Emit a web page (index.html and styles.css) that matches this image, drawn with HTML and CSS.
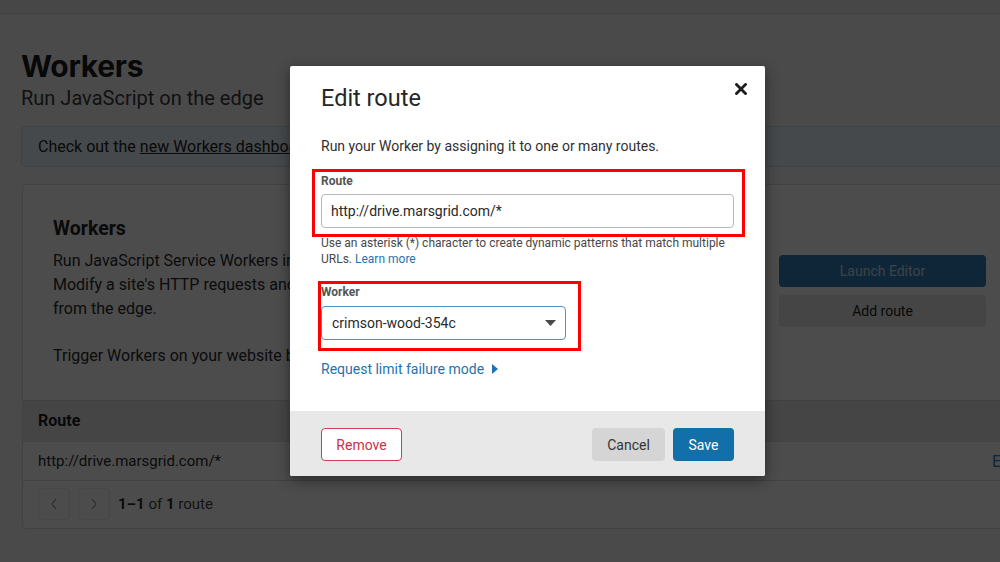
FILE: index.html
```html
<!DOCTYPE html>
<html lang="en">
<head>
<meta charset="utf-8">
<title>Workers – Edit route</title>
<link rel="stylesheet" href="styles.css">
</head>
<body>
<div class="topbar"></div>
<main class="page">
  <h1 class="page-title">Workers</h1>
  <p class="page-sub">Run JavaScript on the edge</p>
  <div class="banner">Check out the <a class="banner-link" href="#">new Workers dashboard</a> to manage your scripts.</div>

  <section class="card">
    <div class="card-head">
      <div class="card-text">
        <h2 class="card-title">Workers</h2>
        <p class="card-p">Run JavaScript Service Workers in Cloudflare's global network.<br>Modify a site's HTTP requests and responses, make parallel requests, or generate responses<br>from the edge.</p>
        <p class="card-p card-p2">Trigger Workers on your website by adding a route.</p>
      </div>
      <div class="card-actions">
        <button class="btn-launch">Launch Editor</button>
        <button class="btn-add">Add route</button>
      </div>
    </div>
    <div class="table-head">Route</div>
    <div class="table-row"><span>http://drive.marsgrid.com/*</span><a class="row-edit" href="#">Edit</a></div>
    <div class="pager">
      <button class="pg-btn"><svg width="10" height="12" viewBox="0 0 10 12"><polyline points="7,1 3,6 7,11" fill="none" stroke="#2c2c2c" stroke-width="1.2"/></svg></button>
      <button class="pg-btn"><svg width="10" height="12" viewBox="0 0 10 12"><polyline points="3,1 7,6 3,11" fill="none" stroke="#2c2c2c" stroke-width="1.2"/></svg></button>
      <span class="pg-text"><b>1–1</b> of <b>1</b> route</span>
    </div>
  </section>
</main>

<div class="overlay">
  <div class="modal">
    <div class="modal-body">
      <div class="modal-head">
        <h3 class="modal-title">Edit route</h3>
        <button class="close" aria-label="Close"><svg width="12" height="12" viewBox="0 0 12 12"><path d="M1.5 1.5 L10.5 10.5 M10.5 1.5 L1.5 10.5" stroke="#1d1d1d" stroke-width="2.8" stroke-linecap="square"/></svg></button>
      </div>
      <p class="modal-desc">Run your Worker by assigning it to one or many routes.</p>

      <div class="field field-route">
        <label class="field-label">Route</label>
        <div class="input">http://drive.marsgrid.com/*</div>
        <span class="mark mark-route"></span>
      </div>
      <p class="help">Use an asterisk (*) character to create dynamic patterns that match multiple URLs. <a class="link" href="#">Learn more</a></p>

      <div class="field field-worker">
        <label class="field-label">Worker</label>
        <div class="select"><span>crimson-wood-354c</span><svg width="11" height="6" viewBox="0 0 11 6"><polygon points="0,0 11,0 5.5,6" fill="#4a4a4a"/></svg></div>
        <span class="mark mark-worker"></span>
      </div>

      <a class="toggle" href="#">Request limit failure mode <svg width="6" height="10" viewBox="0 0 6 10"><polygon points="0,0 6,5 0,10" fill="#1f73ad"/></svg></a>
    </div>
    <div class="modal-foot">
      <button class="btn-remove">Remove</button>
      <div class="foot-right">
        <button class="btn-cancel">Cancel</button>
        <button class="btn-save">Save</button>
      </div>
    </div>
  </div>
</div>
</body>
</html>
```

FILE: styles.css
```css
* { box-sizing: border-box; }
html, body { margin: 0; padding: 0; }
body {
  width: 1000px;
  height: 562px;
  overflow: hidden;
  background: #f9f9f9;
  font-family: Roboto, Inter, "Liberation Sans", sans-serif;
  color: #222;
  position: relative;
}
button { font-family: inherit; }

.topbar {
  height: 14px;
  background: #eeeeee;
  border-bottom: 1px solid #d6d6d6;
}

.page {
  padding: 34px 0 0 21px;
  width: 1100px;
}
.page-title {
  margin: 0;
  font-family: Inter, Roboto, sans-serif;
  font-size: 30px;
  line-height: 36px;
  font-weight: 700;
  color: #1b1b1b;
  letter-spacing: -0.3px;
}
.page-sub {
  margin: 2px 0 0;
  font-size: 20px;
  line-height: 25px;
  color: #3a3a3a;
}
.banner {
  margin-top: 15px;
  height: 41px;
  border: 1px solid #cfdde6;
  border-radius: 4px;
  background: #eaf4fb;
  padding: 0 16px;
  font-size: 16px;
  line-height: 39px;
  color: #222;
}
.banner-link { color: #222; text-decoration: underline; }

.card {
  margin: 17px 0 0 1px;
  width: 1010px;
  background: #fff;
  border: 1px solid #dcdcdc;
  border-radius: 4px;
}
.card-head {
  display: flex;
  justify-content: space-between;
  padding: 32px 45px 32px 30px;
}
.card-title {
  margin: 0;
  font-size: 19.5px;
  line-height: 24px;
  font-weight: 700;
  color: #222;
}
.card-p {
  margin: 8px 0 0;
  font-size: 16px;
  line-height: 24px;
  color: #2a2a2a;
  white-space: nowrap;
}
.card-p2 { margin-top: 23px; }
.card-actions {
  width: 207px;
  padding-top: 38px;
  display: flex;
  flex-direction: column;
  gap: 8px;
}
.btn-launch, .btn-add {
  height: 32px;
  border: 0;
  border-radius: 4px;
  font-size: 14px;
}
.btn-launch { background: #2f80bb; color: #c9e0f0; }
.btn-add { background: #e6e6e6; color: #222; }

.table-head {
  height: 41px;
  background: #e8e8e8;
  border-top: 1px solid #d8d8d8;
  padding: 0 15px;
  font-size: 16px;
  font-weight: 700;
  line-height: 40px;
  color: #1e1e1e;
}
.table-row {
  height: 40px;
  border-top: 1px solid #e0e0e0;
  border-bottom: 1px solid #e0e0e0;
  padding: 0 12px 0 15px;
  display: flex;
  justify-content: space-between;
  align-items: center;
  font-size: 15px;
  color: #2a2a2a;
}
.row-edit { color: #2f80bb; text-decoration: none; font-size: 16px; }
.pager {
  display: flex;
  align-items: center;
  gap: 8px;
  padding: 7px 15px 8px;
}
.pg-btn {
  width: 32px;
  height: 32px;
  border: 1px solid #dcdcdc;
  border-radius: 4px;
  background: #fff;
  display: flex;
  align-items: center;
  justify-content: center;
  padding: 0;
  opacity: 0.5;
}
.pg-text { font-size: 15px; color: #444; }
.pg-text b { color: #2a2a2a; }

.overlay {
  position: absolute;
  inset: 0;
  background: rgba(0, 0, 0, 0.7);
  padding: 66px 0 0 290px;
}
.modal {
  width: 475px;
  background: #fff;
  border-radius: 2px;
  box-shadow: 0 4px 14px rgba(0, 0, 0, 0.45);
  overflow: hidden;
}
.modal-body {
  padding: 16px 31px 32px;
}
.modal-head {
  display: flex;
  justify-content: space-between;
  align-items: flex-start;
}
.modal-title {
  margin: 0;
  font-size: 23.5px;
  line-height: 32px;
  font-weight: 400;
  color: #262626;
}
.close {
  margin: -4px -19px 0 0;
  width: 24px;
  height: 22px;
  border: 0;
  background: none;
  padding: 0;
  display: flex;
  align-items: center;
  justify-content: center;
}
.modal-desc {
  margin: 22px 0 0;
  font-size: 14px;
  line-height: 20px;
  color: #303030;
}
.field { position: relative; }
.field-route { margin-top: 17px; }
.field-worker { margin-top: 17px; width: 245px; }
.field-label {
  display: block;
  font-size: 12px;
  line-height: 16px;
  font-weight: 700;
  color: #555;
}
.input, .select {
  height: 34px;
  border-radius: 4px;
  font-size: 14px;
  color: #2a2a2a;
  display: flex;
  align-items: center;
}
.input {
  margin-top: 5px;
  border: 1px solid #b9b9b9;
  padding: 0 9px;
}
.select {
  margin-top: 6px;
  border: 1px solid #4a94c8;
  padding: 0 9px 0 10px;
  justify-content: space-between;
}
.mark {
  position: absolute;
  border: 3px solid #ff0000;
  pointer-events: none;
}
.mark-route { top: -4px; left: -9px; right: -11px; bottom: -9px; }
.mark-worker { top: -3px; left: -3px; right: -15px; bottom: -11px; }

.help {
  margin: 7px 0 0;
  font-size: 12px;
  line-height: 16px;
  color: #484848;
}
.link { color: #1f73ad; text-decoration: none; }
.toggle {
  display: inline-flex;
  align-items: center;
  gap: 8px;
  margin-top: 19px;
  font-size: 14px;
  line-height: 20px;
  color: #1f73ad;
  text-decoration: none;
}

.modal-foot {
  height: 65px;
  background: #e8e8e8;
  padding: 17px 31px 15px;
  display: flex;
  justify-content: space-between;
}
.foot-right { display: flex; gap: 8px; }
.btn-remove, .btn-cancel, .btn-save {
  height: 33px;
  border-radius: 4px;
  font-size: 14px;
  padding: 0;
}
.btn-remove {
  width: 81px;
  background: #fff;
  border: 1px solid #d53a4e;
  color: #d0304a;
}
.btn-cancel {
  width: 73px;
  background: #d5d5d6;
  border: 0;
  color: #333;
}
.btn-save {
  width: 61px;
  background: #136fa8;
  border: 0;
  color: #fff;
}
```
